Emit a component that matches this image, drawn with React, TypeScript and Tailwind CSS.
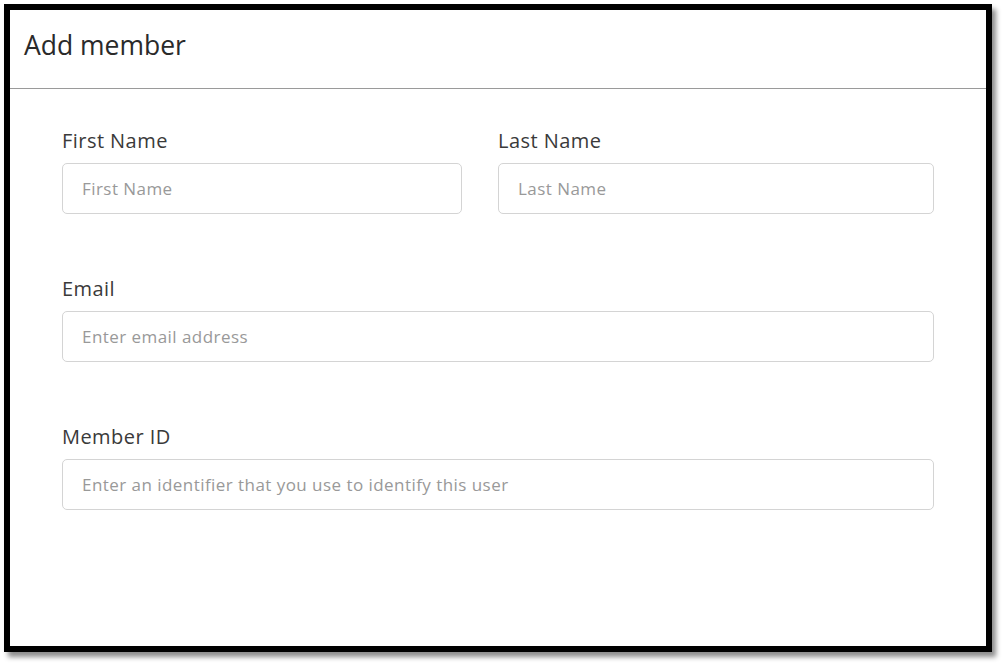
export default function App() {
  return (
    <div className="w-[1005px] h-[665px] bg-white pl-[4px] pt-[4px]" style={{ fontFamily: '"Open Sans", sans-serif' }}>
      <div className="w-[988px] h-[648px] border-[6px] border-black bg-white shadow-[4px_5px_5px_rgba(0,0,0,0.45)] flex flex-col">
        <div className="h-[79px] border-b border-[#9a9a9a] flex items-center pl-[14px] pb-[7px]">
          <h1 className="text-[26.5px] text-[#2a2a2a] font-normal">Add member</h1>
        </div>
        <div className="px-[52px] pt-[39px] flex flex-col gap-[62px]">
          <div className="grid grid-cols-[400px_1fr] gap-x-[36px]">
            <Field label="First Name" placeholder="First Name" />
            <Field label="Last Name" placeholder="Last Name" />
          </div>
          <Field label="Email" placeholder="Enter email address" />
          <Field label="Member ID" placeholder="Enter an identifier that you use to identify this user" />
        </div>
      </div>
    </div>
  );
}

function Field({ label, placeholder }: { label: string; placeholder: string }) {
  return (
    <div className="flex flex-col">
      <label className="text-[20px] tracking-[0.45px] text-[#3a3a3a] leading-[26px] mb-[9px]">{label}</label>
      <input
        type="text"
        placeholder={placeholder}
        className="h-[51px] w-full rounded-[5px] border border-[#d4d4d4] px-[19px] text-[17px] tracking-[0.45px] placeholder:text-[#999] outline-none"
        style={{ fontFamily: '"Open Sans", sans-serif' }}
      />
    </div>
  );
}
